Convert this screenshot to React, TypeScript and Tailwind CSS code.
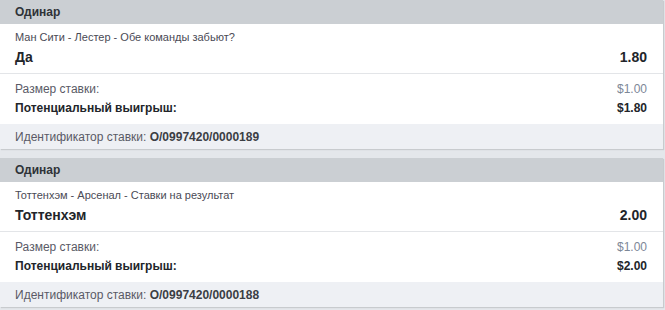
type Bet = {
  event: string;
  selection: string;
  odds: string;
  stake: string;
  payout: string;
  betId: string;
};

const bets: Bet[] = [
  {
    event: "Ман Сити - Лестер - Обе команды забьют?",
    selection: "Да",
    odds: "1.80",
    stake: "$1.00",
    payout: "$1.80",
    betId: "O/0997420/0000189",
  },
  {
    event: "Тоттенхэм - Арсенал - Ставки на результат",
    selection: "Тоттенхэм",
    odds: "2.00",
    stake: "$1.00",
    payout: "$2.00",
    betId: "O/0997420/0000188",
  },
];

const BetCard = ({ bet }: { bet: Bet }) => {
  return (
    <div className="w-[663px] bg-white shadow-[1px_1px_1px_rgba(0,0,0,0.12)]">
      {/* Header */}
      <div className="h-[24px] bg-[#cbcfd3] px-[15px] flex items-center text-[12px] font-bold text-[#2f3338]">
        Одинар
      </div>

      {/* Selection */}
      <div className="h-[50px] px-[15px] pr-[16px] pt-[6px] border-b border-[#e3e5e8]">
        <div className="text-[11px] leading-[14px] text-[#4a4a55]">
          {bet.event}
        </div>
        <div className="flex justify-between items-center mt-[4px] text-[14px] leading-[18px] font-bold text-[#22252a]">
          <span>{bet.selection}</span>
          <span>{bet.odds}</span>
        </div>
      </div>

      {/* Stake */}
      <div className="h-[50px] px-[15px] pr-[16px] pt-[7px] text-[12px] leading-[16px]">
        <div className="flex justify-between">
          <span className="text-[#5a5a66]">Размер ставки:</span>
          <span className="text-[#7d8797]">{bet.stake}</span>
        </div>
        <div className="flex justify-between mt-[3px] font-bold text-[#22252a]">
          <span>Потенциальный выигрыш:</span>
          <span>{bet.payout}</span>
        </div>
      </div>

      {/* Bet id */}
      <div className="h-[25px] bg-[#eef0f4] px-[15px] flex items-center text-[12px] text-[#5a5a66]">
        Идентификатор ставки:&nbsp;
        <span className="font-bold text-[#3b3e44]">{bet.betId}</span>
      </div>
    </div>
  );
};

export default function App() {
  return (
    <div
      className="w-[665px] h-[310px] bg-[#e4e7eb] flex flex-col gap-[9px] overflow-hidden"
      style={{ fontFamily: '"Liberation Sans", Arial, sans-serif' }}
    >
      {bets.map((bet) => (
        <BetCard key={bet.betId} bet={bet} />
      ))}
    </div>
  );
}
